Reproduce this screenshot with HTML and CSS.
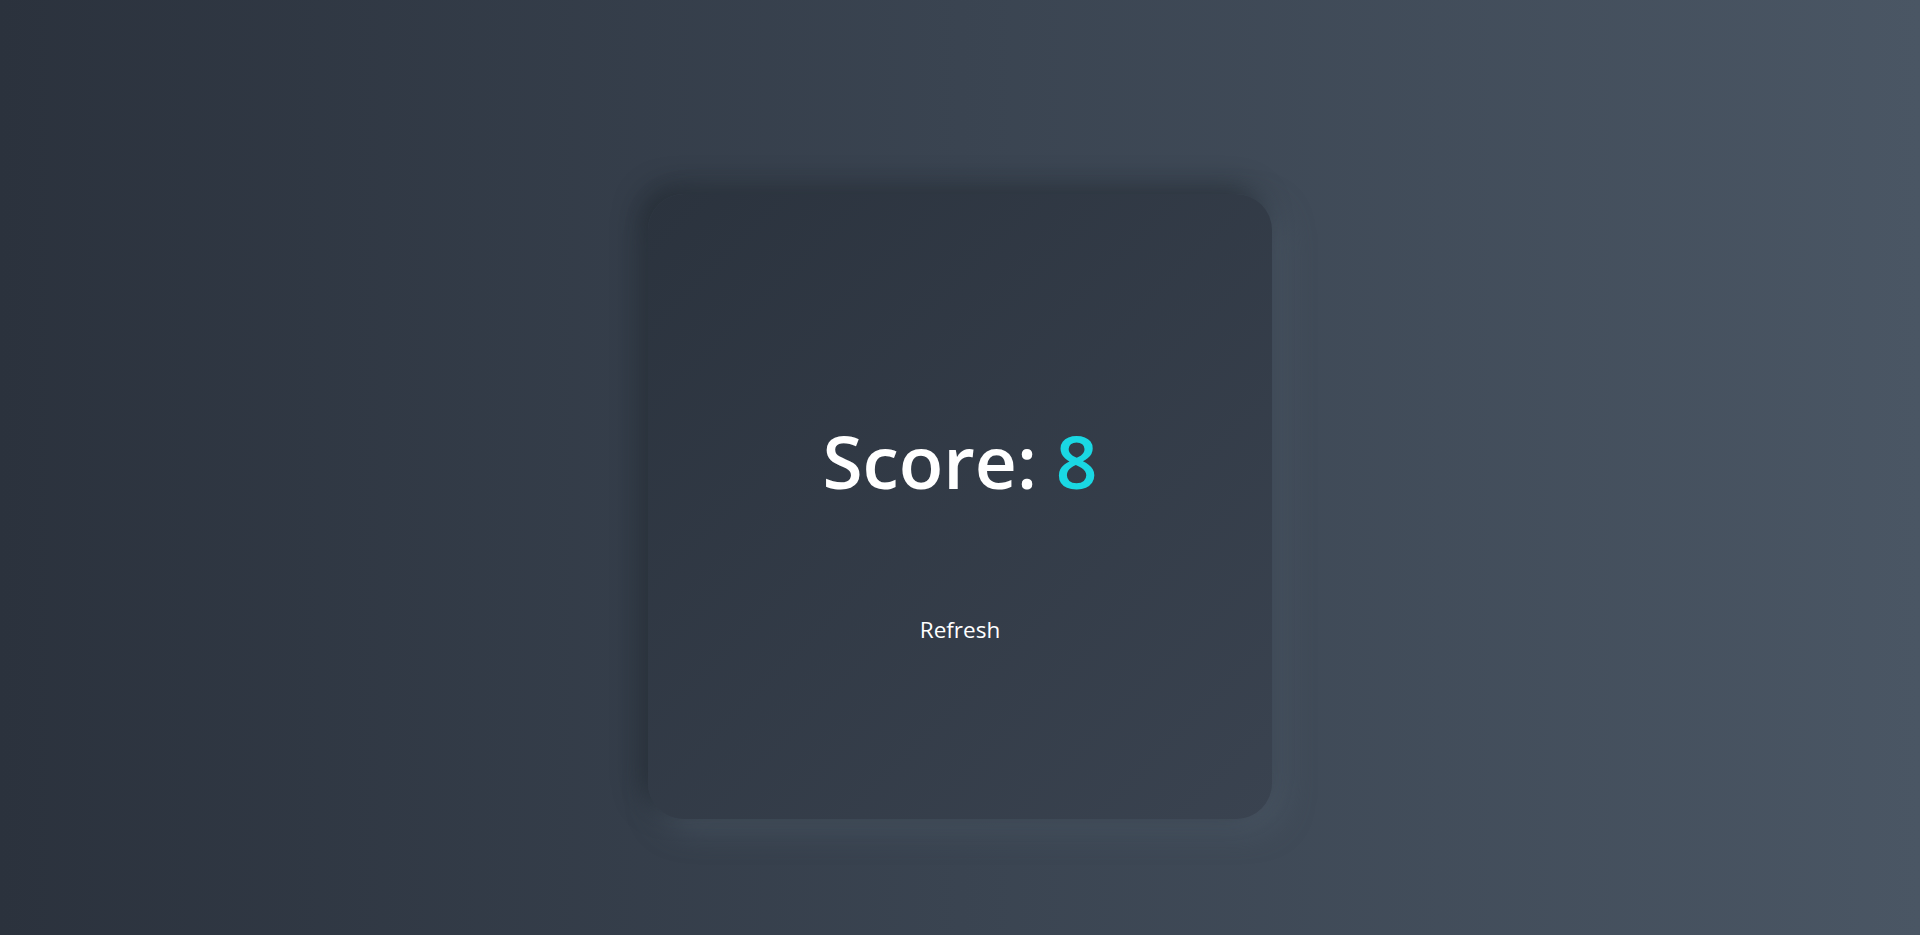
FILE: index.html
```html
<!DOCTYPE html>
<html lang="en">
<head>
<meta charset="utf-8">
<title>Score</title>
<link rel="stylesheet" href="styles.css">
</head>
<body>
<main class="page">
  <section class="card">
    <h1 class="score">Score: <span class="score-value">8</span></h1>
    <button class="refresh" type="button">Refresh</button>
  </section>
</main>
</body>
</html>
```

FILE: styles.css
```css
* { box-sizing: border-box; }
html, body { margin: 0; height: 100%; }
body {
  font-family: "Open Sans", "Noto Sans", sans-serif;
  background: linear-gradient(to right, #2b323d 0%, #3a4451 50%, #4a5664 100%);
  color: #fff;
  overflow: hidden;
}
.page {
  height: 100%;
  display: flex;
  align-items: flex-start;
  justify-content: center;
  padding-top: 194px;
}
.card {
  width: 624px;
  height: 625px;
  border-radius: 36px;
  background: linear-gradient(135deg, #2b333e 0%, #3a4350 100%);
  box-shadow: -8px -8px 26px rgba(22, 27, 34, 0.5), 10px 10px 30px rgba(78, 91, 106, 0.7);
  display: flex;
  flex-direction: column;
  align-items: center;
  padding-top: 231px;
}
.score {
  margin: 0;
  font-size: 73px;
  font-weight: 600;
  line-height: 72px;
}
.score-value { color: #1ad8e3; }
.refresh {
  margin-top: 114px;
  background: none;
  border: none;
  color: #fff;
  font-family: inherit;
  font-size: 22.5px;
  line-height: 30px;
  padding: 4px 12px;
  cursor: pointer;
}
```
